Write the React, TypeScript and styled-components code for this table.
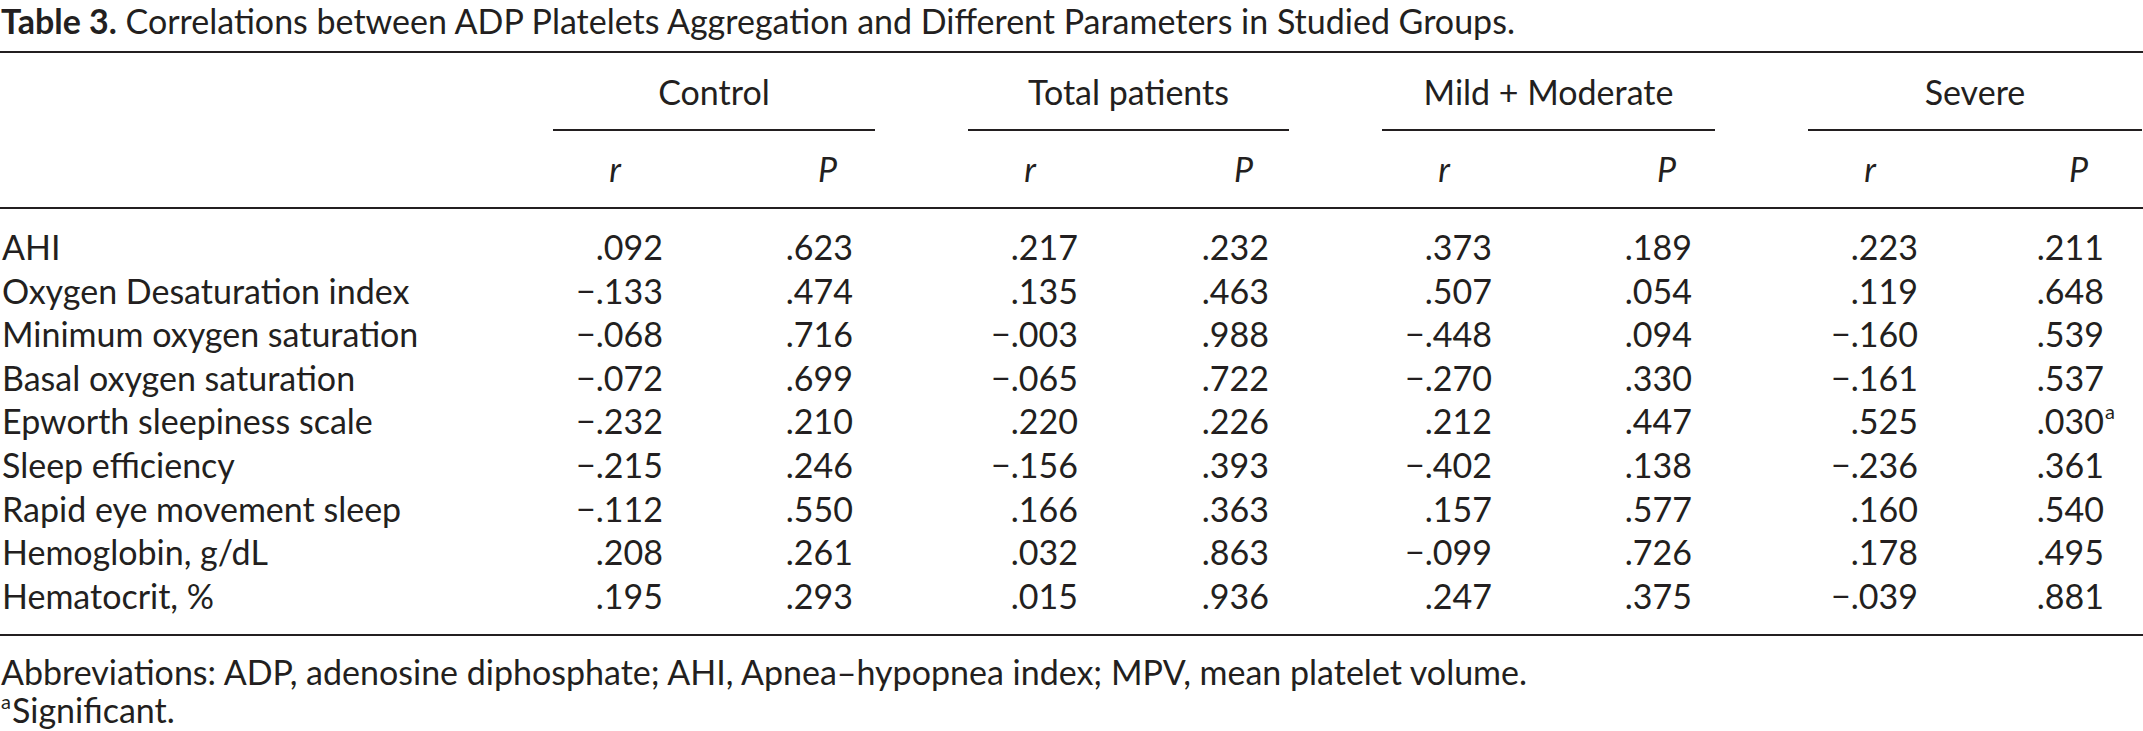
import styled, { createGlobalStyle } from 'styled-components'

const GlobalStyle = createGlobalStyle`
  html, body {
    margin: 0;
    padding: 0;
    background: #ffffff;
    overflow: hidden;
  }
  body {
    font-family: Lato, 'Open Sans', 'Liberation Sans', sans-serif;
    font-size: 34px;
    color: #231f20;
  }
`

const groups = [
  { name: 'Control', width: 322, pPad: 22 },
  { name: 'Total patients', width: 321, pPad: 20 },
  { name: 'Mild + Moderate', width: 333, pPad: 23 },
  { name: 'Severe', width: 334, pPad: 38 },
]

type Value = { v: string; sig?: boolean }

const rows: { label: string; values: Value[] }[] = [
  { label: 'AHI', values: [{ v: '.092' }, { v: '.623' }, { v: '.217' }, { v: '.232' }, { v: '.373' }, { v: '.189' }, { v: '.223' }, { v: '.211' }] },
  { label: 'Oxygen Desaturation index', values: [{ v: '−.133' }, { v: '.474' }, { v: '.135' }, { v: '.463' }, { v: '.507' }, { v: '.054' }, { v: '.119' }, { v: '.648' }] },
  { label: 'Minimum oxygen saturation', values: [{ v: '−.068' }, { v: '.716' }, { v: '−.003' }, { v: '.988' }, { v: '−.448' }, { v: '.094' }, { v: '−.160' }, { v: '.539' }] },
  { label: 'Basal oxygen saturation', values: [{ v: '−.072' }, { v: '.699' }, { v: '−.065' }, { v: '.722' }, { v: '−.270' }, { v: '.330' }, { v: '−.161' }, { v: '.537' }] },
  { label: 'Epworth sleepiness scale', values: [{ v: '−.232' }, { v: '.210' }, { v: '.220' }, { v: '.226' }, { v: '.212' }, { v: '.447' }, { v: '.525' }, { v: '.030', sig: true }] },
  { label: 'Sleep efficiency', values: [{ v: '−.215' }, { v: '.246' }, { v: '−.156' }, { v: '.393' }, { v: '−.402' }, { v: '.138' }, { v: '−.236' }, { v: '.361' }] },
  { label: 'Rapid eye movement sleep', values: [{ v: '−.112' }, { v: '.550' }, { v: '.166' }, { v: '.363' }, { v: '.157' }, { v: '.577' }, { v: '.160' }, { v: '.540' }] },
  { label: 'Hemoglobin, g/dL', values: [{ v: '.208' }, { v: '.261' }, { v: '.032' }, { v: '.863' }, { v: '−.099' }, { v: '.726' }, { v: '.178' }, { v: '.495' }] },
  { label: 'Hematocrit, %', values: [{ v: '.195' }, { v: '.293' }, { v: '.015' }, { v: '.936' }, { v: '.247' }, { v: '.375' }, { v: '−.039' }, { v: '.881' }] },
]

const Page = styled.div`
  width: 2143px;
`

const Caption = styled.div`
  line-height: 41px;
  white-space: nowrap;
  padding-left: 1px;
`

const CaptionLabel = styled.span`
  font-weight: 700;
`

const Rule = styled.div`
  height: 2px;
  background: #231f20;
`

const TopRule = styled(Rule)`
  margin-top: 10px;
`

const Row = styled.div`
  display: grid;
  grid-template-columns: 460px ${groups.map((g) => `${g.width}px`).join(' ')};
  column-gap: 93px;
`

const GroupHeadRow = styled(Row)`
  padding-top: 17px;
  line-height: 44px;
`

const GroupHead = styled.div`
  display: flex;
  flex-direction: column;
  text-align: center;
  white-space: nowrap;
`

const GroupLine = styled.div`
  height: 2px;
  margin-top: 15px;
  background: #231f20;
`

const SubHeadRow = styled(Row)`
  padding-top: 16px;
  padding-bottom: 16px;
  line-height: 44px;
`

const Pair = styled.div`
  display: grid;
  grid-template-columns: 124px 1fr;
`

const SubHead = styled.div<{ $pad?: number }>`
  font-style: italic;
  text-align: ${(p) => (p.$pad ? 'right' : 'center')};
  padding-right: ${(p) => p.$pad ?? 0}px;
`

const Body = styled.div`
  padding-top: 16px;
  padding-bottom: 17px;
`

const DataRow = styled(Row)`
  line-height: 43.6px;
`

const Label = styled.div`
  white-space: nowrap;
  padding-left: 2px;
`

const Num = styled.div<{ $pad: number }>`
  text-align: right;
  padding-right: ${(p) => p.$pad}px;
  white-space: nowrap;
`

const NumText = styled.span`
  position: relative;
`

const Sup = styled.sup`
  position: absolute;
  left: 100%;
  top: 1px;
  font-size: 20px;
  line-height: 20px;
  margin-left: 1px;
`

const Notes = styled.div`
  padding-top: 17px;
  line-height: 38px;
`

const Note = styled.div`
  white-space: nowrap;
  padding-left: 1px;
`

const NoteSup = styled.sup`
  font-size: 20px;
  line-height: 1;
  vertical-align: 14px;
  margin-right: 1px;
`

const App = () => (
  <Page>
    <GlobalStyle />
    <Caption>
      <CaptionLabel>Table 3.</CaptionLabel> Correlations between ADP Platelets Aggregation and Different
      Parameters in Studied Groups.
    </Caption>
    <TopRule />

    <GroupHeadRow>
      <div />
      {groups.map((g) => (
        <GroupHead key={g.name}>
          {g.name}
          <GroupLine />
        </GroupHead>
      ))}
    </GroupHeadRow>

    <SubHeadRow>
      <div />
      {groups.map((g) => (
        <Pair key={g.name}>
          <SubHead>r</SubHead>
          <SubHead $pad={g.pPad + 16}>P</SubHead>
        </Pair>
      ))}
    </SubHeadRow>
    <Rule />

    <Body>
      {rows.map((row) => (
        <DataRow key={row.label}>
          <Label>{row.label}</Label>
          {groups.map((g, i) => {
            const r = row.values[i * 2]
            const p = row.values[i * 2 + 1]
            return (
              <Pair key={g.name}>
                <Num $pad={14}>{r.v}</Num>
                <Num $pad={g.pPad}>
                  <NumText>
                    {p.v}
                    {p.sig && <Sup>a</Sup>}
                  </NumText>
                </Num>
              </Pair>
            )
          })}
        </DataRow>
      ))}
    </Body>
    <Rule />

    <Notes>
      <Note>Abbreviations: ADP, adenosine diphosphate; AHI, Apnea–hypopnea index; MPV, mean platelet volume.</Note>
      <Note>
        <NoteSup>a</NoteSup>Significant.
      </Note>
    </Notes>
  </Page>
)

export default App
